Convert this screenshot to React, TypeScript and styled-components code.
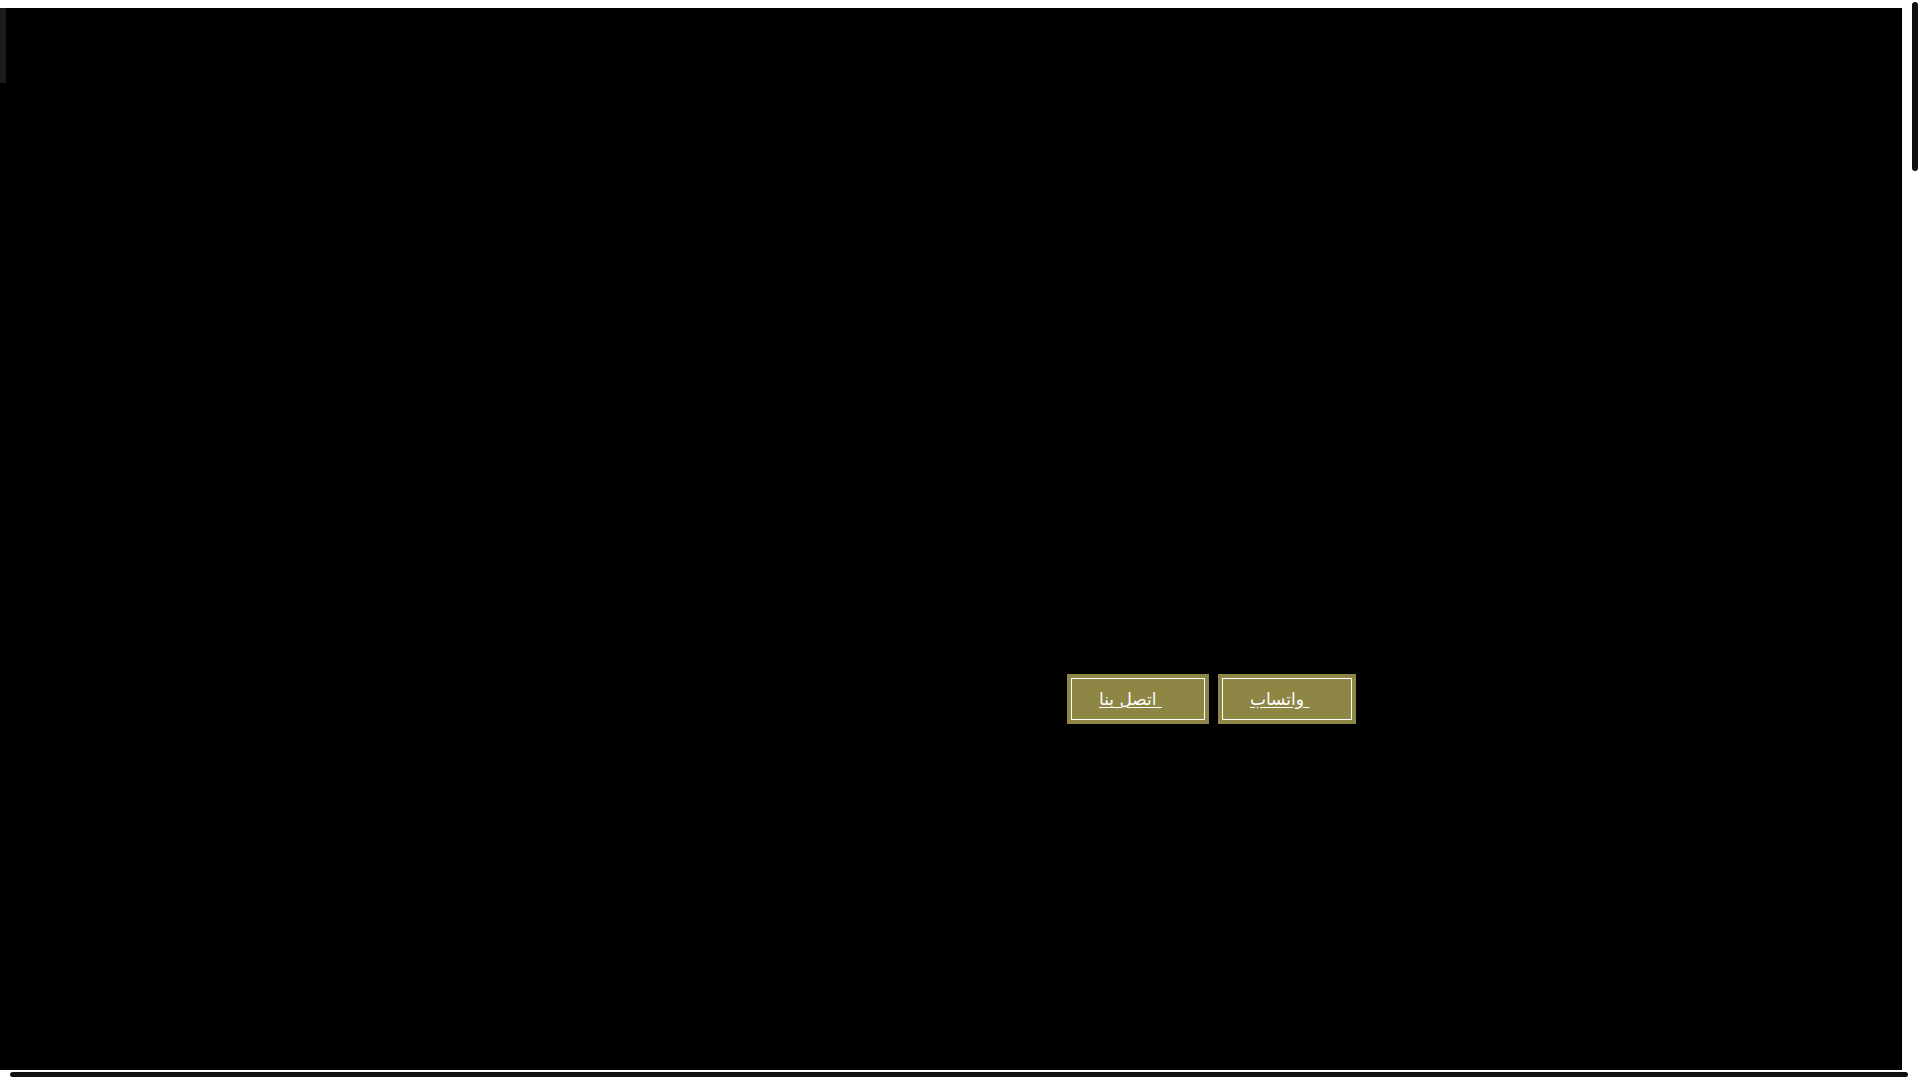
import styled, { createGlobalStyle } from "styled-components";

const GlobalStyle = createGlobalStyle`
  html, body {
    margin: 0;
    padding: 0;
    background: #ffffff;
    overflow: hidden;
  }
  body {
    font-family: "DejaVu Sans", "Liberation Sans", sans-serif;
  }
`;

const buttons = [
  { label: "اتصل بنا\u00a0", href: "#contact" },
  { label: "واتساب\u00a0", href: "#whatsapp" },
];

export default function App() {
  return (
    <>
      <GlobalStyle />
      <Frame>
        <Stage>
          <SideTab />
          <Content>
            <ButtonRow>
              {buttons.map((b) => (
                <ActionButton key={b.href} href={b.href}>
                  {b.label}
                </ActionButton>
              ))}
            </ButtonRow>
          </Content>
        </Stage>
        <VTrack>
          <VThumb />
        </VTrack>
        <HTrack>
          <HThumb />
        </HTrack>
      </Frame>
    </>
  );
}

const Frame = styled.div`
  width: 1920px;
  height: 1080px;
  display: grid;
  grid-template-columns: 1902px 18px;
  grid-template-rows: 8px 1062px 10px;
`;

const Stage = styled.main`
  grid-column: 1;
  grid-row: 2;
  background: #000000;
  display: flex;
  align-items: flex-start;
`;

const SideTab = styled.div`
  width: 6px;
  height: 75px;
  background: #1b1b1b;
  flex-shrink: 0;
`;

const Content = styled.div`
  flex: 1;
  padding: 666px 0 0 1061px;
`;

const ButtonRow = styled.div`
  display: flex;
  gap: 9px;
`;

const ActionButton = styled.a`
  display: inline-block;
  box-sizing: border-box;
  border: 4px solid #8d8644;
  box-shadow: inset 0 0 0 1px #ffffff;
  background: #8d8644;
  color: #ffffff;
  font-size: 17px;
  line-height: 20px;
  padding: 11px 43px 11px 28px;
  text-decoration: underline;
  text-underline-offset: 2px;
`;

const VTrack = styled.div`
  grid-column: 2;
  grid-row: 1 / span 3;
  padding: 2px 0 0 10px;
`;

const VThumb = styled.div`
  width: 6px;
  height: 169px;
  border-radius: 3px;
  background: #111111;
`;

const HTrack = styled.div`
  grid-column: 1 / span 2;
  grid-row: 3;
  padding: 2px 0 0 10px;
`;

const HThumb = styled.div`
  width: 1898px;
  height: 5px;
  border-radius: 3px;
  background: #111111;
`;
